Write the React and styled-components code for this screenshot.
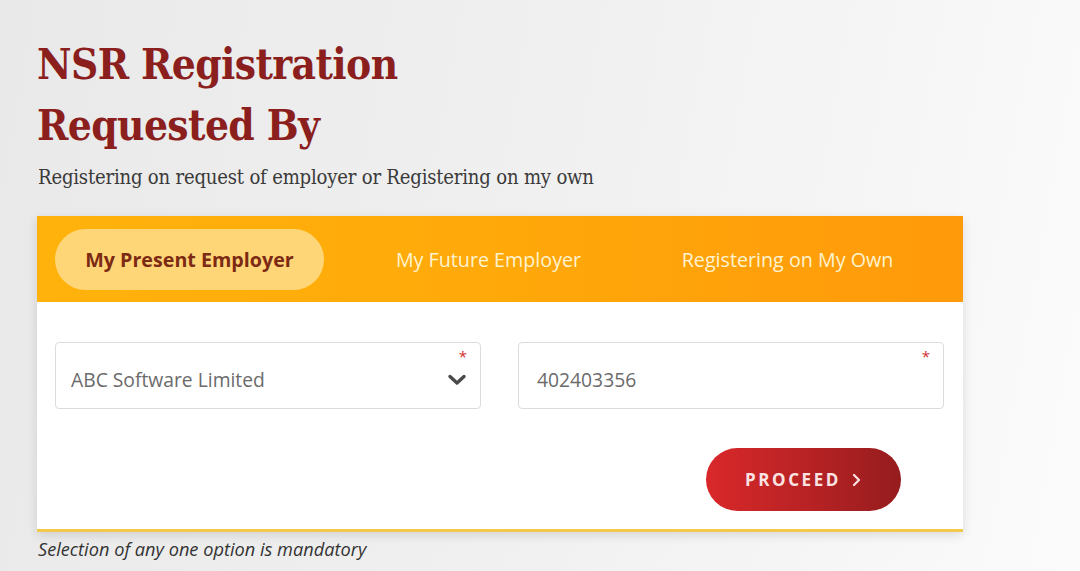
import React, { useState } from "react";
import styled, { createGlobalStyle } from "styled-components";

const Global = createGlobalStyle`
    html, body {
        margin: 0;
        padding: 0;
    }
    body {
        font-family: "Open Sans", "Liberation Sans", sans-serif;
        background: linear-gradient(100deg, #e9e9e9 0%, #f1f1f1 55%, #fbfbfb 100%);
        min-height: 571px;
    }
`;

const tabs = ["My Present Employer", "My Future Employer", "Registering on My Own"];

export default function App() {
    const [active, setActive] = useState(0);

    return (
        <>
            <Global />
            <Page>
                <Title>
                    NSR Registration
                    <br />
                    Requested By
                </Title>
                <Subtitle>Registering on request of employer or Registering on my own</Subtitle>
                <Card>
                    <TabBar>
                        {tabs.map((t, i) => (
                            <Tab key={t} $active={i === active} onClick={() => setActive(i)}>
                                {t}
                            </Tab>
                        ))}
                    </TabBar>
                    <Body>
                        <Fields>
                            <Field>
                                <Value>ABC Software Limited</Value>
                                <Star>*</Star>
                                <Chevron viewBox="0 0 20 14">
                                    <path d="M3 3.5 L10 10 L17 3.5" fill="none" stroke="#4a4a4a" strokeWidth="3.4" strokeLinecap="round" strokeLinejoin="round" />
                                </Chevron>
                            </Field>
                            <Field $pad={18}>
                                <Value>402403356</Value>
                                <Star>*</Star>
                            </Field>
                        </Fields>
                        <Actions>
                            <Proceed>
                                PROCEED
                                <svg width="11" height="16" viewBox="0 0 11 16">
                                    <path d="M3 3 L8 8 L3 13" fill="none" stroke="#fbe3e3" strokeWidth="2.2" strokeLinecap="round" strokeLinejoin="round" />
                                </svg>
                            </Proceed>
                        </Actions>
                    </Body>
                </Card>
                <Note>Selection of any one option is mandatory</Note>
            </Page>
        </>
    );
}

const Page = styled.div`
    padding: 34px 0 0 37px;
    width: 926px;
`;

const Title = styled.h1`
    margin: 0;
    font-family: "DejaVu Serif Condensed", "DejaVu Serif", serif;
    font-weight: 700;
    font-size: 42px;
    line-height: 61px;
    letter-spacing: -0.6px;
    color: #8b1f1d;
`;

const Subtitle = styled.p`
    margin: 8px 0 26px 1px;
    font-family: "DejaVu Serif Condensed", "DejaVu Serif", serif;
    font-size: 20.1px;
    line-height: 26px;
    color: #3a3a3a;
    letter-spacing: -0.2px;
`;

const Card = styled.div`
    background: #ffffff;
    border-bottom: 3px solid #f2c94c;
    box-shadow: 0 3px 10px rgba(0, 0, 0, 0.12);
`;

const TabBar = styled.div`
    display: flex;
    align-items: center;
    gap: 30px;
    height: 86px;
    padding: 0 18px;
    box-sizing: border-box;
    background: linear-gradient(90deg, #ffb20c 0%, #ffaa0a 45%, #ff9a0a 100%);
`;

const Tab = styled.button`
    width: 269px;
    height: 61px;
    border: 0;
    border-radius: 31px;
    font-family: "Open Sans", "Liberation Sans", sans-serif;
    font-size: 19.7px;
    font-weight: ${(p) => (p.$active ? 700 : 400)};
    color: ${(p) => (p.$active ? "#7c2a14" : "#fff3cf")};
    background: ${(p) => (p.$active ? "#ffd677" : "transparent")};
    cursor: pointer;
    padding: 0;
`;

const Body = styled.div`
    padding: 40px 19px 18px 18px;
`;

const Fields = styled.div`
    display: grid;
    grid-template-columns: 1fr 1fr;
    gap: 37px;
`;

const Field = styled.div`
    position: relative;
    height: 67px;
    box-sizing: border-box;
    border: 1px solid #dcdcdc;
    border-radius: 4px;
    display: flex;
    align-items: center;
    padding: 8px 15px 0 ${(p) => p.$pad || 15}px;
`;

const Value = styled.span`
    font-size: 19.3px;
    color: #6b6b6b;
`;

const Star = styled.span`
    position: absolute;
    top: 3px;
    right: 13px;
    color: #d32f2f;
    font-size: 15px;
`;

const Chevron = styled.svg`
    position: absolute;
    right: 13px;
    top: 30px;
    width: 20px;
    height: 14px;
`;

const Actions = styled.div`
    display: flex;
    justify-content: flex-end;
    padding: 39px 43px 0 0;
`;

const Proceed = styled.button`
    width: 195px;
    height: 63px;
    border: 0;
    border-radius: 32px;
    background: linear-gradient(90deg, #d9282a 0%, #b62224 55%, #951c1e 100%);
    color: #fbe3e3;
    font-family: "Open Sans", "Liberation Sans", sans-serif;
    font-weight: 700;
    font-size: 17px;
    letter-spacing: 2.6px;
    display: flex;
    align-items: center;
    justify-content: center;
    gap: 10px;
    cursor: pointer;
`;

const Note = styled.p`
    margin: 5px 0 0 1px;
    font-style: italic;
    font-size: 18.2px;
    color: #333;
`;
